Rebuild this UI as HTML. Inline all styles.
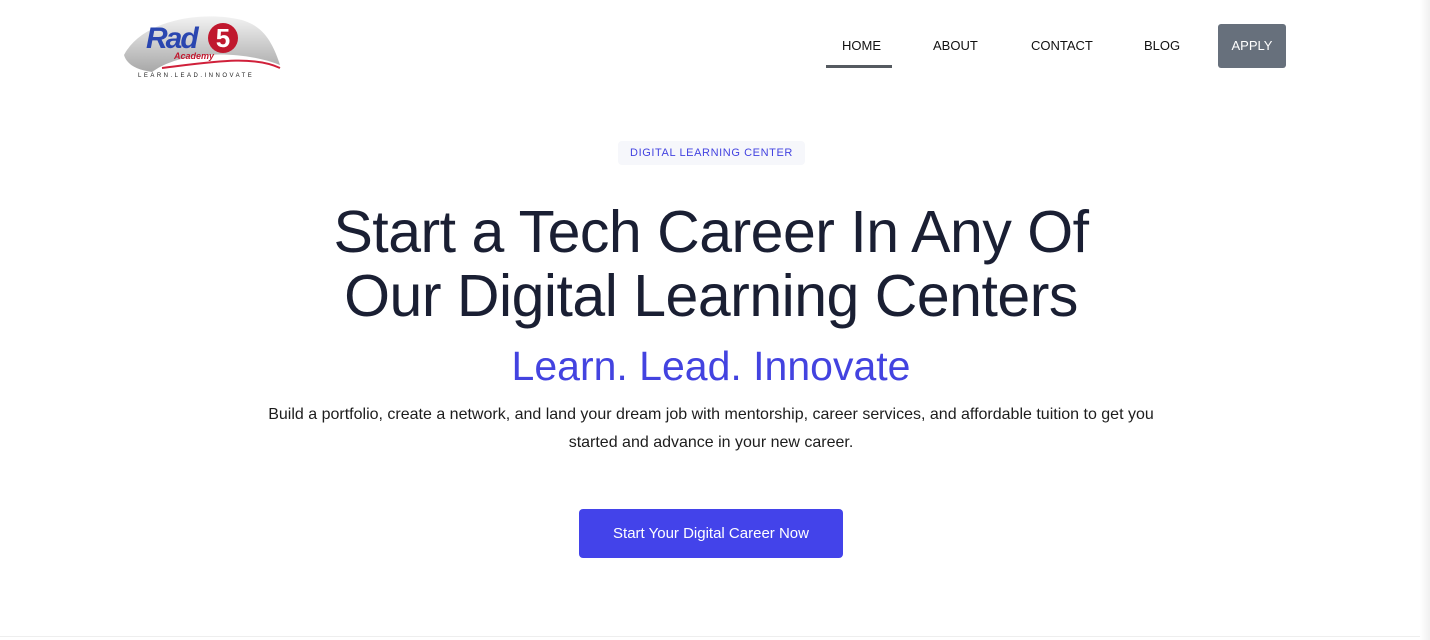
<!DOCTYPE html>
<html><head><meta charset="utf-8"><style>
*{margin:0;padding:0;box-sizing:border-box}
body{width:1430px;height:640px;overflow:hidden;background:#fff;font-family:"Liberation Sans",Arial,sans-serif;position:relative}
.nav a{position:absolute;top:38px;font-size:13px;color:#111;text-decoration:none}
.home-ul{position:absolute;left:826px;top:65px;width:66px;height:3px;background:#555a60}
.apply{position:absolute;left:1218px;top:24px;width:68px;height:44px;background:#67707c;border-radius:3px;color:#fff;font-size:13px;text-align:center;line-height:44px}
.badge{position:absolute;left:618px;top:141px;width:187px;height:24px;background:#f6f7fb;border-radius:4px;color:#4343e0;font-size:11px;letter-spacing:.6px;text-align:center;line-height:24px}
h1{position:absolute;left:0;width:1422px;top:200px;text-align:center;font-weight:400;font-size:59px;line-height:64px;color:#1a1f33;letter-spacing:-.5px}
.sub{position:absolute;left:0;width:1422px;top:343px;text-align:center;font-size:41px;color:#4343e0}
.p{position:absolute;left:250px;width:922px;top:401px;text-align:center;font-size:16px;line-height:28px;color:#1d1d1d}
.btn{position:absolute;left:579px;top:509px;width:264px;height:49px;background:#4343ea;border-radius:4px;color:#fff;font-size:15px;text-align:center;line-height:49px}
.rs{position:absolute;right:0;top:0;width:10px;height:640px;background:linear-gradient(to right,#fff,#f0f0f0)}
.bl{position:absolute;left:0;top:636px;width:1420px;height:1px;background:#eee}
</style></head><body>
<div style="position:absolute;left:122px;top:10px;width:160px;height:75px">
<svg width="160" height="65" viewBox="0 0 160 65"><defs><linearGradient id="g" x1="0" y1="0" x2="0" y2="1"><stop offset="0" stop-color="#f2f2f2"/><stop offset="1" stop-color="#a8a8a8"/></linearGradient></defs>
<path d="M2 45 C20 10 80 0 120 10 C140 16 150 30 158 55 C120 40 60 40 30 62 C15 60 5 55 2 45Z" fill="url(#g)"/>
<path d="M40 58 C90 52 130 45 158 58" stroke="#d0203a" stroke-width="2" fill="none"/></svg>
<div style="position:absolute;left:24px;top:12px;font:italic 900 30px 'Liberation Sans';color:#2a46b0;letter-spacing:-2px">Rad</div>
<div style="position:absolute;left:86px;top:13px;width:30px;height:30px;border-radius:50%;background:#c0182e;color:#fff;font:900 26px/30px 'Liberation Sans';text-align:center">5</div>
<div style="position:absolute;left:52px;top:41px;font:italic 700 9px 'Liberation Sans';color:#c0182e">Academy</div>
<div style="position:absolute;left:16px;top:63px;font:6px 'Liberation Sans';letter-spacing:2.5px;color:#222">LEARN.LEAD.INNOVATE</div>
</div>
<div class="nav"><a style="left:842px">HOME</a><a style="left:933px">ABOUT</a><a style="left:1031px">CONTACT</a><a style="left:1144px">BLOG</a></div>
<div class="home-ul"></div>
<div class="apply">APPLY</div>
<div class="badge">DIGITAL LEARNING CENTER</div>
<h1>Start a Tech Career In Any Of<br>Our Digital Learning Centers</h1>
<div class="sub">Learn. Lead. Innovate</div>
<div class="p">Build a portfolio, create a network, and land your dream job with mentorship, career services, and affordable tuition to get you started and advance in your new career.</div>
<div class="btn">Start Your Digital Career Now</div>
<div class="bl"></div><div class="rs"></div>
</body></html>
